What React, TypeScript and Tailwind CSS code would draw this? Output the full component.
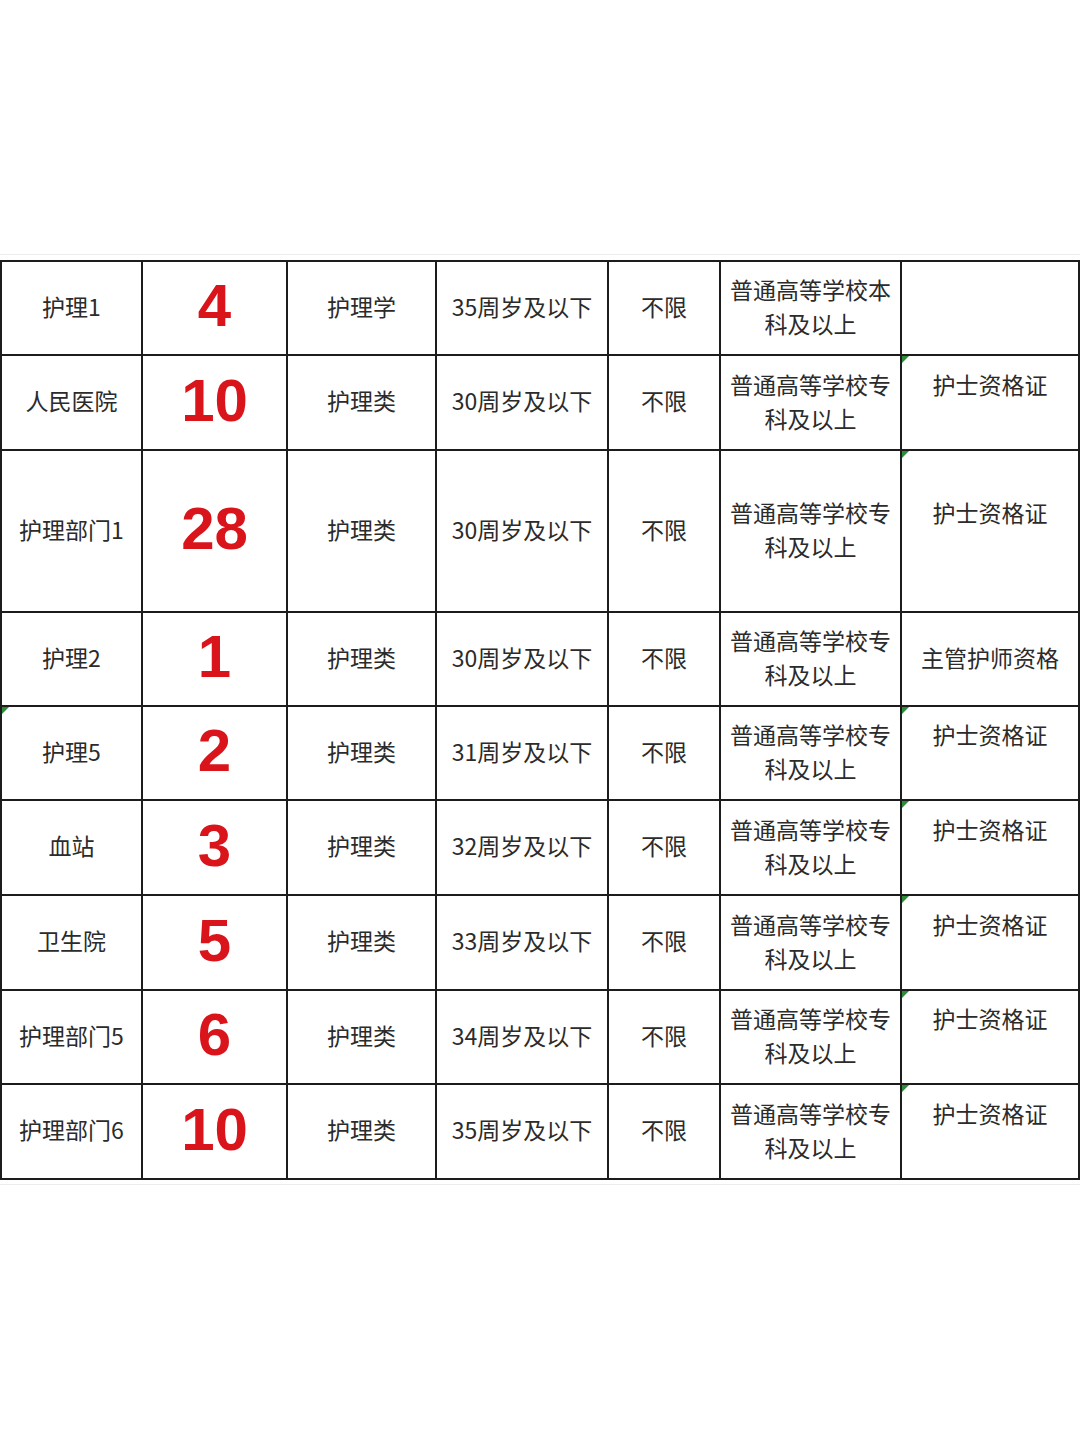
import React from "react";

type Row = {
  name: string;
  num: string;
  major: string;
  age: string;
  other: string;
  edu: [string, string];
  cert: string;
  certTop: boolean;
  h: string;
  nameMark?: boolean;
  certMark?: boolean;
};

const rows: Row[] = [
  { name: "护理1", num: "4", major: "护理学", age: "35周岁及以下", other: "不限", edu: ["普通高等学校本", "科及以上"], cert: "", certTop: true, h: "h-[94px]" },
  { name: "人民医院", num: "10", major: "护理类", age: "30周岁及以下", other: "不限", edu: ["普通高等学校专", "科及以上"], cert: "护士资格证", certTop: true, h: "h-[95px]", certMark: true },
  { name: "护理部门1", num: "28", major: "护理类", age: "30周岁及以下", other: "不限", edu: ["普通高等学校专", "科及以上"], cert: "护士资格证", certTop: true, h: "h-[162px]", certMark: true },
  { name: "护理2", num: "1", major: "护理类", age: "30周岁及以下", other: "不限", edu: ["普通高等学校专", "科及以上"], cert: "主管护师资格", certTop: false, h: "h-[94px]" },
  { name: "护理5", num: "2", major: "护理类", age: "31周岁及以下", other: "不限", edu: ["普通高等学校专", "科及以上"], cert: "护士资格证", certTop: true, h: "h-[94px]", nameMark: true, certMark: true },
  { name: "血站", num: "3", major: "护理类", age: "32周岁及以下", other: "不限", edu: ["普通高等学校专", "科及以上"], cert: "护士资格证", certTop: true, h: "h-[95px]", certMark: true },
  { name: "卫生院", num: "5", major: "护理类", age: "33周岁及以下", other: "不限", edu: ["普通高等学校专", "科及以上"], cert: "护士资格证", certTop: true, h: "h-[95px]", certMark: true },
  { name: "护理部门5", num: "6", major: "护理类", age: "34周岁及以下", other: "不限", edu: ["普通高等学校专", "科及以上"], cert: "护士资格证", certTop: true, h: "h-[94px]", certMark: true },
  { name: "护理部门6", num: "10", major: "护理类", age: "35周岁及以下", other: "不限", edu: ["普通高等学校专", "科及以上"], cert: "护士资格证", certTop: true, h: "h-[95px]", certMark: true },
];

const cell = "relative flex items-center justify-center border-r-2 border-b-2 border-[#1c1c1c] text-center pb-[4px]";

function Mark() {
  return (
    <span className="absolute left-0 top-0 w-0 h-0 border-t-[7px] border-t-[#2e8b3a] border-r-[7px] border-r-transparent" />
  );
}

export default function App() {
  return (
    <div className="w-[1080px] h-[1440px] bg-white pt-[260px] text-[#2b2b2b] font-['Noto_Sans_CJK_SC',sans-serif]">
      <div className="border-t border-t-[#ececec] h-0 w-full -mt-[6px] mb-[5px]" />
      <div className="grid grid-cols-[141px_145px_149px_172px_112px_181px_178px] border-t-2 border-l-2 border-[#1c1c1c]">
        {rows.map((r, i) => (
          <React.Fragment key={i}>
            <div className={`${cell} ${r.h} text-[23px]`}>
              {r.nameMark && <Mark />}
              {r.name}
            </div>
            <div className={`${cell} ${r.h}`}>
              <span className="text-[60px] font-bold leading-none text-[#d9141b] font-['Liberation_Sans',Arial,sans-serif]">
                {r.num}
              </span>
            </div>
            <div className={`${cell} ${r.h} text-[23px]`}>{r.major}</div>
            <div className={`${cell} ${r.h} text-[23px]`}>{r.age}</div>
            <div className={`${cell} ${r.h} text-[23px]`}>{r.other}</div>
            <div className={`${cell} ${r.h} flex-col text-[23px] leading-[34px]`}>
              <span className="whitespace-nowrap">{r.edu[0]}</span>
              <span className="whitespace-nowrap">{r.edu[1]}</span>
            </div>
            <div className={`${cell} ${r.h} flex-col text-[23px] leading-[34px]`}>
              {r.certMark && <Mark />}
              {r.certTop ? (
                <>
                  <span className="whitespace-nowrap">{r.cert || "\u00a0"}</span>
                  <span>{"\u00a0"}</span>
                </>
              ) : (
                <span className="whitespace-nowrap">{r.cert}</span>
              )}
            </div>
          </React.Fragment>
        ))}
      </div>
      <div className="border-t border-t-[#ececec] h-0 w-full mt-[4px]" />
    </div>
  );
}
